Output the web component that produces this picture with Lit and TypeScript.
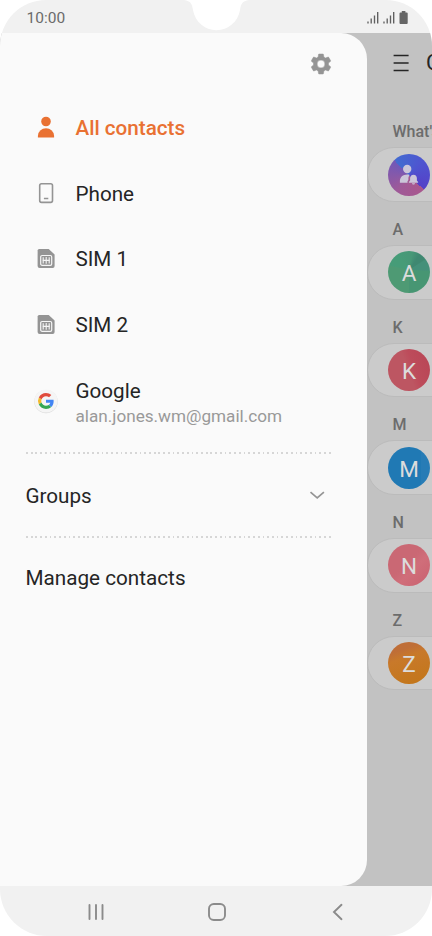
import { LitElement, html, css, svg } from "lit";
import { customElement } from "lit/decorators.js";

const gear = svg`<path d="M19.43 12.98c.04-.32.07-.64.07-.98s-.03-.66-.07-.98l2.11-1.65c.19-.15.24-.42.12-.64l-2-3.46c-.12-.22-.39-.3-.61-.22l-2.49 1c-.52-.4-1.08-.73-1.69-.98l-.38-2.65A.488.488 0 0 0 14 2h-4c-.25 0-.46.18-.49.42l-.38 2.65c-.61.25-1.17.59-1.69.98l-2.49-1c-.23-.09-.49 0-.61.22l-2 3.46c-.13.22-.07.49.12.64l2.11 1.65c-.04.32-.07.65-.07.98s.03.66.07.98l-2.11 1.65c-.19.15-.24.42-.12.64l2 3.46c.12.22.39.3.61.22l2.49-1c.52.4 1.08.73 1.69.98l.38 2.65c.03.24.24.42.49.42h4c.25 0 .46-.18.49-.42l.38-2.65c.61-.25 1.17-.59 1.69-.98l2.49 1c.23.09.49 0 .61-.22l2-3.46c.12-.22.07-.49-.12-.64l-2.11-1.65zM12 15.900a3.900 3.900 0 1 1 0-7.800 3.900 3.900 0 0 1 0 7.800z" fill="#949494" stroke="#949494" stroke-width=".5"/>`;

const signal = html`<svg class="signal" width="12" height="13" viewBox="0 0 12 13">
  <path d="M1 10.600v1.800M4.200 7.600v4.800M7.500 4.400v8M10.700 1v11.400" stroke="#606060" stroke-width="1.350"/>
</svg>`;

const simIcon = html`<svg width="24" height="24" viewBox="0 0 24 24">
  <path d="M5.200 2h9.500L20.600 7.500v11.400a2 2 0 0 1-2 2H5.600a2 2 0 0 1-2-2V3.600A1.600 1.600 0 0 1 5.200 2z" fill="#949494"/>
  <rect x="6.700" y="8.500" width="11" height="9.800" rx="1.400" fill="none" stroke="#f5f5f5" stroke-width="1.200"/>
  <path d="M9.200 10.300v6.200M12.200 10v6.800M15.200 10.300v6.200M8.500 13.400h7.400" stroke="#f5f5f5" stroke-width="1.100"/>
</svg>`;

const personIcon = html`<svg width="24" height="24" viewBox="0 0 24 24">
  <circle cx="12" cy="5.500" r="4.800" fill="#e97132"/>
  <path d="M3.900 21.400v-1.600a8.100 7.600 0 0 1 16.200 0v1.600z" fill="#e97132"/>
</svg>`;

const phoneIcon = html`<svg width="24" height="24" viewBox="0 0 24 24">
  <rect x="5.700" y="1.800" width="12.800" height="18.600" rx="1.800" fill="none" stroke="#949494" stroke-width="1.600"/>
  <path d="M9.900 16.500h4.400" stroke="#949494" stroke-width="1.300"/>
</svg>`;

const googleIcon = html`<svg width="26" height="26" viewBox="0 0 26 26">
  <circle cx="13" cy="13.600" r="11.700" fill="#d8d8d8"/>
  <circle cx="13" cy="13" r="11.600" fill="#f5f5f5"/>
  <g transform="translate(5 5) scale(.333)">
    <path fill="#4285F4" d="M46.98 24.55c0-1.57-.15-3.09-.38-4.55H24v9.02h12.94c-.58 2.96-2.26 5.48-4.78 7.18l7.73 6c4.51-4.18 7.09-10.36 7.09-17.65z"/>
    <path fill="#e04b3d" d="M24 9.5c3.54 0 6.71 1.22 9.21 3.6l6.85-6.85C35.9 2.38 30.47 0 24 0 14.62 0 6.51 5.38 2.56 13.22l7.98 6.19C12.43 13.72 17.74 9.5 24 9.5z"/>
    <path fill="#f2b92b" d="M10.53 28.59a14.5 14.5 0 0 1 0-9.18l-7.98-6.19a24 24 0 0 0 0 21.56l7.98-6.19z"/>
    <path fill="#34A853" d="M24 48c6.48 0 11.93-2.13 15.89-5.81l-7.73-6c-2.15 1.45-4.92 2.3-8.16 2.3-6.26 0-11.57-4.22-13.47-9.91l-7.98 6.19C6.51 42.62 14.62 48 24 48z"/>
  </g>
</svg>`;

const profileIcon = html`<svg width="24" height="24" viewBox="0 0 24 24">
  <circle cx="10.200" cy="6" r="4.200" fill="#cbc6d9"/>
  <path d="M2.900 19.700v-1.600c0-3.800 3-6.600 7.400-6.600.9 0 1.700.1 2.400.4-.9 1-1.300 2.200-1.300 3.500v1.600l-.9 1.300v1.400z" fill="#cbc6d9"/>
  <path d="M16.500 11.700c2.200 0 3.400 1.600 3.400 3.500v2.200l1.200 1.500v.8h-9.200v-.8l1.200-1.500v-2.200c0-1.900 1.200-3.500 3.400-3.500zM14.900 20.300h3.200c-.2.800-.8 1.200-1.600 1.200s-1.400-.4-1.600-1.200z" fill="#cbc6d9"/>
</svg>`;

const contacts = [
  { label: "What's new", tone: "profile", initial: "" },
  { label: "A", tone: "green", initial: "A" },
  { label: "K", tone: "red", initial: "K" },
  { label: "M", tone: "blue", initial: "M" },
  { label: "N", tone: "pink", initial: "N" },
  { label: "Z", tone: "orange", initial: "Z" },
];

const accounts = [
  { name: "All contacts", icon: personIcon, active: true },
  { name: "Phone", icon: phoneIcon },
  { name: "SIM 1", icon: simIcon },
  { name: "SIM 2", icon: simIcon },
];

@customElement("app-root")
export class AppRoot extends LitElement {
  static styles = css`
    :host { display: block; width: 432px; height: 936px; background: #fff; font-family: Roboto, "Noto Sans", sans-serif; color: #252525; }
    * { box-sizing: border-box; }
    svg { display: block; flex: none; }
    .screen { display: flex; flex-direction: column; width: 432px; height: 936px; border-radius: 46px 46px 47px 47px; overflow: hidden; background: #f1f1f1; position: relative; }
    .status { height: 33px; flex: none; display: flex; align-items: center; padding: 2px 23.500px 0 26.500px; font-size: 15.500px; color: #6b6b6b; }
    .time { flex: 1; }
    .notch { position: absolute; left: 184px; top: 0; }
    .signal { margin-right: 4px; }
    .main { height: 853px; flex: none; display: grid; grid-template-columns: 367px 65px; background: #c2c2c2; overflow: hidden; }
    .drawer { background: #fafafa; border-radius: 0 26px 26px 0; padding: 18.500px 36px 0 25.500px; display: flex; flex-direction: column; }
    .settings { align-self: flex-end; margin: 0 -2px 19.500px 0; }
    .row { height: 65.700px; display: flex; align-items: center; padding-left: 8.500px; gap: 17.500px; font-size: 20.650px; white-space: nowrap; }
    .active { color: #e97132; font-weight: 500; }
    .account { height: 94px; display: flex; align-items: center; padding-left: 7.500px; gap: 16.500px; padding-bottom: 9px; }
    .account-icon { padding-top: 1px; }
    .account-text { display: flex; flex-direction: column; gap: 0; padding-top: 5px; }
    .account-name { font-size: 20.650px; line-height: 26px; }
    .email { font-size: 17.150px; line-height: 24px; color: #999; }
    .dots { height: 2px; width: 305px; background: repeating-linear-gradient(90deg, #d6d6d6 0 1.800px, transparent 1.800px 4.730px); flex: none; }
    .groups { height: 82px; display: flex; align-items: center; justify-content: space-between; font-size: 20.650px; padding: 2px 6px 0 0; }
    .manage { height: 80px; display: flex; align-items: center; font-size: 20.700px; }
    .behind { display: flex; flex-direction: column; overflow: hidden; width: 65px; }
    .toolbar { height: 71.300px; flex: none; padding: 20px 0 0 25.500px; display: flex; align-items: flex-start; gap: 16.500px; font-size: 22px; line-height: 20px; white-space: nowrap; }
    .section { height: 97.700px; flex: none; display: flex; flex-direction: column; }
    .letter { height: 43px; flex: none; padding: 17px 0 0 25.500px; font-size: 16px; line-height: 22px; font-weight: 500; color: #6c6c6c; white-space: nowrap; }
    .card { height: 54.700px; width: 330px; border-radius: 27px; background: #cbcbcb; border: 1px solid #bbb; display: flex; align-items: center; padding-left: 20px; }
    .avatar { width: 42px; height: 42px; border-radius: 50%; display: flex; align-items: center; justify-content: center; font-size: 22.500px; color: #dcdcdc; padding-top: 2px; }
    .profile { background: conic-gradient(from -45deg at 50% 50%, #426bd0 0deg, #4e55d0 90deg, #5541c8 180deg, #a9578d 180deg, #9f5a98 260deg, #7058b8 360deg); padding: 0; }
    .green { background: conic-gradient(from 0deg at 50% 45%, #479877 0 10deg, #3f8871 35deg 55deg, #44907a 60deg 90deg, #479673 95deg 180deg, #4e9a74 180deg 280deg, #469c78 285deg 320deg, #479877 360deg); }
    .red { background: linear-gradient(70deg, #bd5662 0 48%, #bd4c5b 60%, #b84555); }
    .blue { background: linear-gradient(90deg, #2079b4 0 78%, #277cb6 78%); }
    .pink { background: linear-gradient(135deg, #ca6874 0 45%, #d06e7a 60%, #c9616f); }
    .orange { background: linear-gradient(160deg, #bf6e37 0 22%, #c8792a 38%, #c27618); }
    .nav { height: 50px; flex: none; display: grid; grid-template-columns: repeat(3, 121px); padding-left: 35.500px; }
    .key { display: flex; align-items: center; justify-content: center; padding-top: 2px; }
  `;

  render() {
    return html`
      <div class="screen">
        <header class="status">
          <span class="time">10:00</span>
          ${signal}${signal}
          <svg width="10" height="14" viewBox="0 0 10 14"><path d="M2.800 0h3.600v1.400h1.300a1 1 0 0 1 1 1V12a1 1 0 0 1-1 1H1.500a1 1 0 0 1-1-1V2.400a1 1 0 0 1 1-1h1.300z" fill="#666"/></svg>
          <svg class="notch" width="65" height="31" viewBox="0 0 65 31"><path d="M0 0C7 1 8 4 9 10C11 22 21 30.200 32.500 30.200S54 22 56 10C57 4 58 1 65 0z" fill="#fff"/></svg>
        </header>
        <div class="main">
          <aside class="drawer">
            <svg class="settings" width="24" height="24" viewBox="0 0 24 24">${gear}</svg>
            ${accounts.map((a) => html`<div class="row ${a.active ? "active" : ""}">${a.icon}<span>${a.name}</span></div>`)}
            <div class="account">
              <span class="account-icon">${googleIcon}</span>
              <div class="account-text"><span class="account-name">Google</span><span class="email">alan.jones.wm@gmail.com</span></div>
            </div>
            <div class="dots"></div>
            <div class="groups"><span>Groups</span>
              <svg width="16" height="10" viewBox="0 0 16 10"><path d="M1.500 1.200L8.200 6.900L14.900 1.200" fill="none" stroke="#949494" stroke-width="1.700"/></svg>
            </div>
            <div class="dots"></div>
            <div class="manage">Manage contacts</div>
          </aside>
          <section class="behind">
            <div class="toolbar">
              <svg width="17" height="20" viewBox="0 0 17 20"><path d="M.6 2.500h15M.6 10h15M.6 17.500h15" stroke="#252525" stroke-width="1.500"/></svg>
              <span>Contacts</span>
            </div>
            ${contacts.map((c) => html`<div class="section">
              <div class="letter">${c.label}</div>
              <div class="card"><div class="avatar ${c.tone}">${c.initial || profileIcon}</div></div>
            </div>`)}
          </section>
        </div>
        <nav class="nav">
          <div class="key"><svg width="18" height="18" viewBox="0 0 18 18"><path d="M2.500 2v14M9 2v14M15.500 2v14" stroke="#8b8b8b" stroke-width="1.900" stroke-linecap="round"/></svg></div>
          <div class="key"><svg width="20" height="20" viewBox="0 0 20 20"><rect x="2" y="2" width="16" height="16" rx="4.800" fill="none" stroke="#8b8b8b" stroke-width="1.900"/></svg></div>
          <div class="key"><svg width="12" height="18" viewBox="0 0 12 18"><path d="M9.500 1.800L2 9L9.500 16.200" fill="none" stroke="#8b8b8b" stroke-width="1.900" stroke-linecap="round"/></svg></div>
        </nav>
      </div>`;
  }
}
